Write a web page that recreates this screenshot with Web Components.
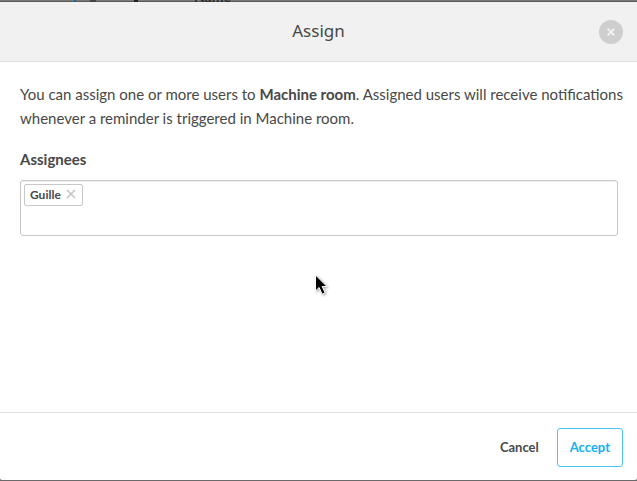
<!DOCTYPE html>
<html lang="en">
<head>
<meta charset="utf-8">
<meta name="viewport" content="width=device-width, initial-scale=1">
<title>Assign</title>
<style>
    html, body {
        margin: 0;
        height: 100%;
    }
    body {
        --text-color: #484848;
        --border-color: #c8c8c8;
        --accent-color: #12b0f5;
        font-family: Lato, "Liberation Sans", sans-serif;
        font-size: 15px;
        line-height: 24px;
        color: var(--text-color);
        background: #6b6969;
        overflow: hidden;
    }
    mouse-pointer {
        position: absolute;
        left: 315px;
        top: 274px;
    }
</style>
</head>
<body>
<modal-backdrop>
    <page-behind slot="behind">Name</page-behind>
    <modal-dialog heading="Assign">
        <p>You can assign one or more users to <strong>Machine room</strong>. Assigned users will receive notifications whenever a reminder is triggered in Machine room.</p>
        <tag-field label="Assignees">
            <user-tag>Guille</user-tag>
        </tag-field>
        <modal-button slot="actions">Cancel</modal-button>
        <modal-button slot="actions" primary>Accept</modal-button>
    </modal-dialog>
</modal-backdrop>
<mouse-pointer></mouse-pointer>

<script>
class ModalBackdrop extends HTMLElement {
    constructor() {
        super();
        this.attachShadow({ mode: 'open' });
    }

    connectedCallback() {
        this.shadowRoot.innerHTML = `
            <style>
                :host {
                    display: flex;
                    flex-direction: column;
                    min-height: 100vh;
                    box-sizing: border-box;
                    padding-bottom: 1px;
                }
            </style>
            <slot name="behind"></slot>
            <slot></slot>
        `;
    }
}

// sliver of the dimmed page that stays visible above the dialog
class PageBehind extends HTMLElement {
    constructor() {
        super();
        this.attachShadow({ mode: 'open' });
    }

    connectedCallback() {
        this.shadowRoot.innerHTML = `
            <style>
                :host {
                    display: flex;
                    align-items: flex-end;
                    height: 2px;
                    overflow: hidden;
                    background:
                        linear-gradient(#0a6e94, #0a6e94) 74px 0 / 2px 2px no-repeat,
                        linear-gradient(#444, #444) 90px 0 / 6px 2px no-repeat,
                        linear-gradient(#222, #222) 134px 0 / 4px 2px no-repeat,
                        linear-gradient(#7b7979 50%, #5c5a5a 50%);
                }
                span {
                    padding-left: 194px;
                    font-size: 14px;
                    line-height: 10px;
                    font-weight: bold;
                    color: #2c2c2c;
                }
            </style>
            <span><slot></slot></span>
        `;
    }
}

class ModalDialog extends HTMLElement {
    constructor() {
        super();
        this.attachShadow({ mode: 'open' });
    }

    connectedCallback() {
        this.setAttribute('role', 'dialog');
        this.setAttribute('aria-label', this.getAttribute('heading'));
        this.render();

        this.shadowRoot.querySelector('#closeBtn').addEventListener('click', () => {
            this.dispatchEvent(new CustomEvent('close'));
        });
    }

    render() {
        this.shadowRoot.innerHTML = `
            <style>
                :host {
                    display: flex;
                    flex-direction: column;
                    flex: 1;
                    background-color: #fff;
                    border-radius: 0 0 2px 2px;
                }
                header {
                    display: grid;
                    grid-template-columns: 24px 1fr 24px;
                    align-items: center;
                    padding: 0 14px;
                    height: 59px;
                    background-color: #f1f1f1;
                    border-bottom: 1px solid #e0e0e0;
                }
                h1 {
                    grid-column: 2;
                    margin: 0;
                    padding-bottom: 2px;
                    text-align: center;
                    font-family: "Noto Sans", sans-serif;
                    font-size: 17px;
                    font-weight: normal;
                }
                #closeBtn {
                    display: grid;
                    place-items: center;
                    width: 24px;
                    height: 24px;
                    padding: 0;
                    border: none;
                    border-radius: 50%;
                    background-color: #cecece;
                    cursor: pointer;
                }
                main {
                    flex: 1;
                    padding: 20px 19px 20px 20px;
                }
                ::slotted(p) {
                    margin: 0 -8px 17px 0;
                }
                footer {
                    display: flex;
                    justify-content: flex-end;
                    gap: 5px;
                    padding: 15px 14px 13px;
                    border-top: 1px solid #e0e0e0;
                }
            </style>
            <header>
                <h1>${this.getAttribute('heading')}</h1>
                <button id="closeBtn" type="button" aria-label="Close">
                    <svg width="8" height="8" viewBox="0 0 8 8" stroke="#f4f4f4" stroke-width="1.8"><path d="M.7.7l6.6 6.6M7.3.7L.7 7.3"/></svg>
                </button>
            </header>
            <main><slot></slot></main>
            <footer><slot name="actions"></slot></footer>
        `;
    }
}

class TagField extends HTMLElement {
    constructor() {
        super();
        this.attachShadow({ mode: 'open' });
    }

    connectedCallback() {
        this.shadowRoot.innerHTML = `
            <style>
                :host {
                    display: block;
                }
                label {
                    display: block;
                    margin-bottom: 9px;
                    font-weight: bold;
                }
                .box {
                    display: flex;
                    flex-wrap: wrap;
                    align-items: flex-start;
                    gap: 4px;
                    min-height: 48px;
                    padding: 3px;
                    border: 1px solid var(--border-color);
                    border-radius: 3px;
                    box-shadow: inset 0 1px 1px #eee;
                }
                input {
                    flex: 1;
                    min-width: 40px;
                    height: 22px;
                    padding: 0;
                    border: none;
                    outline: none;
                    background: none;
                    font: inherit;
                    color: inherit;
                }
            </style>
            <label for="entry">${this.getAttribute('label')}</label>
            <div class="box">
                <slot></slot>
                <input id="entry" type="text" autocomplete="off">
            </div>
        `;
    }
}

class UserTag extends HTMLElement {
    constructor() {
        super();
        this.attachShadow({ mode: 'open' });
    }

    connectedCallback() {
        this.shadowRoot.innerHTML = `
            <style>
                :host {
                    display: flex;
                    align-items: center;
                    gap: 5px;
                    height: 20px;
                    padding: 0 6px 0 5px;
                    border: 1px solid var(--border-color);
                    border-radius: 2px;
                    font-size: 12px;
                    line-height: 20px;
                    font-weight: bold;
                }
                button {
                    display: flex;
                    padding: 0 0 2px;
                    border: none;
                    background: none;
                    cursor: pointer;
                }
            </style>
            <slot></slot>
            <button type="button" aria-label="Remove">
                <svg width="10" height="10" viewBox="0 0 10 10" stroke="#c6c6c6" stroke-width="1.7"><path d="M1 1l8 8M9 1L1 9"/></svg>
            </button>
        `;

        this.shadowRoot.querySelector('button').addEventListener('click', () => this.remove());
    }
}

class ModalButton extends HTMLElement {
    constructor() {
        super();
        this.attachShadow({ mode: 'open' });
    }

    connectedCallback() {
        this.shadowRoot.innerHTML = `
            <style>
                :host {
                    display: block;
                }
                button {
                    height: 39px;
                    padding: 0 12px 1px;
                    border: 1px solid transparent;
                    border-radius: 3px;
                    background: none;
                    font-family: inherit;
                    font-size: 13px;
                    font-weight: bold;
                    color: var(--text-color);
                    cursor: pointer;
                }
                :host([primary]) button {
                    border-color: #4cc4f7;
                    color: var(--accent-color);
                }
            </style>
            <button type="button"><slot></slot></button>
        `;
    }
}

class MousePointer extends HTMLElement {
    constructor() {
        super();
        this.attachShadow({ mode: 'open' });
    }

    connectedCallback() {
        this.shadowRoot.innerHTML = `
            <style>
                :host {
                    display: block;
                    pointer-events: none;
                }
                svg {
                    display: block;
                    filter: drop-shadow(1px 1px 1px rgba(0, 0, 0, .35));
                }
            </style>
            <svg width="14" height="22" viewBox="0 0 14 22">
                <path d="M.5 1v16l3.600-3.500 3 6.700 3-1.300-2.900-6.400h4.800z" fill="#000" stroke="#fff"/>
            </svg>
        `;
    }
}

customElements.define('modal-backdrop', ModalBackdrop);
customElements.define('page-behind', PageBehind);
customElements.define('modal-dialog', ModalDialog);
customElements.define('tag-field', TagField);
customElements.define('user-tag', UserTag);
customElements.define('modal-button', ModalButton);
customElements.define('mouse-pointer', MousePointer);
</script>
</body>
</html>
